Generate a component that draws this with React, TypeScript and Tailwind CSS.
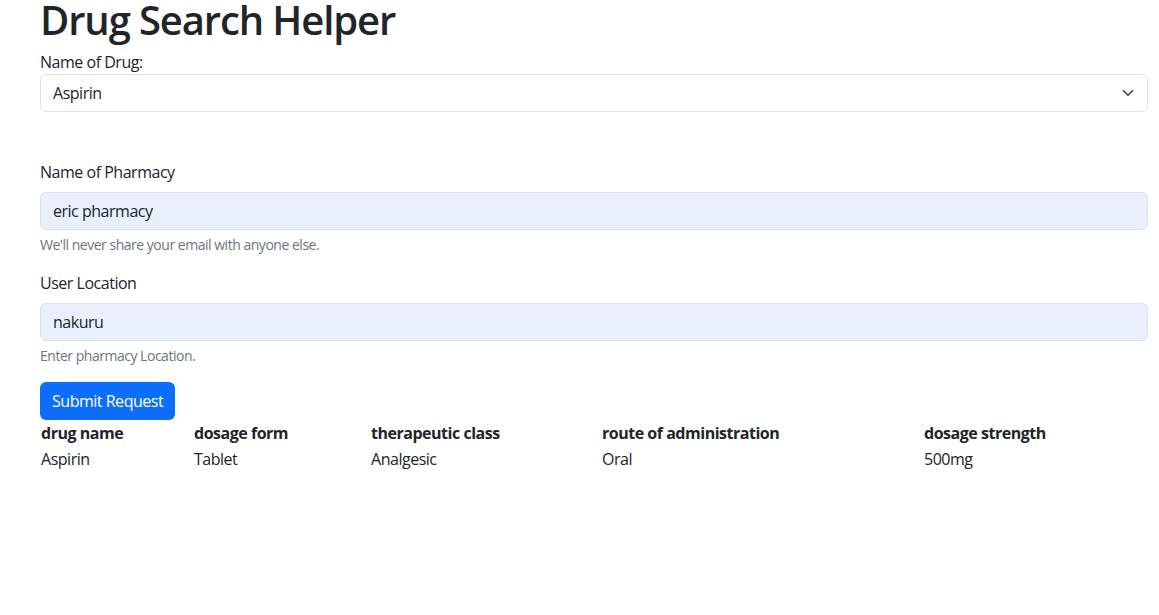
const rows = [
  { drug: "Aspirin", form: "Tablet", cls: "Analgesic", route: "Oral", strength: "500mg" },
];

const cols = "grid grid-cols-[153px_177px_231px_322px_1fr]";

const Field = ({
  label,
  value,
  help,
  className = "",
}: {
  label: string;
  value: string;
  help: string;
  className?: string;
}): React.ReactNode => (
  <div className={className}>
    <label className="block leading-6 mb-2">{label}</label>
    <input
      readOnly
      value={value}
      className="block w-full h-[38px] px-3 rounded-[6px] border border-[#dee2e6] bg-[#e8f0fe] text-[#212529] tracking-[-0.03em] outline-none"
    />
    <div className="mt-1 text-[14px] leading-[21px] text-[#6c757d]">{help}</div>
  </div>
);

export default function App(): React.ReactNode {
  return (
    <div
      className="min-h-[615px] bg-white pl-[40px] pr-[11px] text-[16px] leading-6 tracking-[-0.03em] text-[#212529]"
      style={{ fontFamily: '"Open Sans", "Noto Sans", sans-serif' }}
    >
      <h1 className="mb-[10px] text-[40px] leading-[40px] font-semibold tracking-[-0.028em]">
        Drug Search Helper
      </h1>

      <label className="block leading-6">Name of Drug:</label>
      <div className="relative">
        <select className="block w-full h-[38px] appearance-none pl-3 pr-9 rounded-[6px] border border-[#dee2e6] bg-white text-[#212529] tracking-[-0.03em] outline-none">
          <option>Aspirin</option>
        </select>
        <svg
          className="pointer-events-none absolute right-[13px] top-[13px]"
          width="14"
          height="12"
          viewBox="0 0 16 16"
          fill="none"
          stroke="#343a40"
          strokeWidth="2"
          strokeLinecap="round"
          strokeLinejoin="round"
        >
          <path d="m2 5 6 6 6-6" />
        </svg>
      </div>

      <Field
        className="mt-[48px]"
        label="Name of Pharmacy"
        value="eric pharmacy"
        help="We'll never share your email with anyone else."
      />
      <Field
        className="mt-4"
        label="User Location"
        value="nakuru"
        help="Enter pharmacy Location."
      />

      <button className="mt-4 h-[38px] px-3 rounded-[6px] bg-[#0d6efd] text-white leading-6">
        Submit Request
      </button>

      <div className="w-full">
        <div className={`${cols} font-bold`}>
          <div className="p-px">drug name</div>
          <div className="p-px">dosage form</div>
          <div className="p-px">therapeutic class</div>
          <div className="p-px">route of administration</div>
          <div className="p-px">dosage strength</div>
        </div>
        {rows.map((r) => (
          <div key={r.drug} className={cols}>
            <div className="p-px">{r.drug}</div>
            <div className="p-px">{r.form}</div>
            <div className="p-px">{r.cls}</div>
            <div className="p-px">{r.route}</div>
            <div className="p-px">{r.strength}</div>
          </div>
        ))}
      </div>
    </div>
  );
}
